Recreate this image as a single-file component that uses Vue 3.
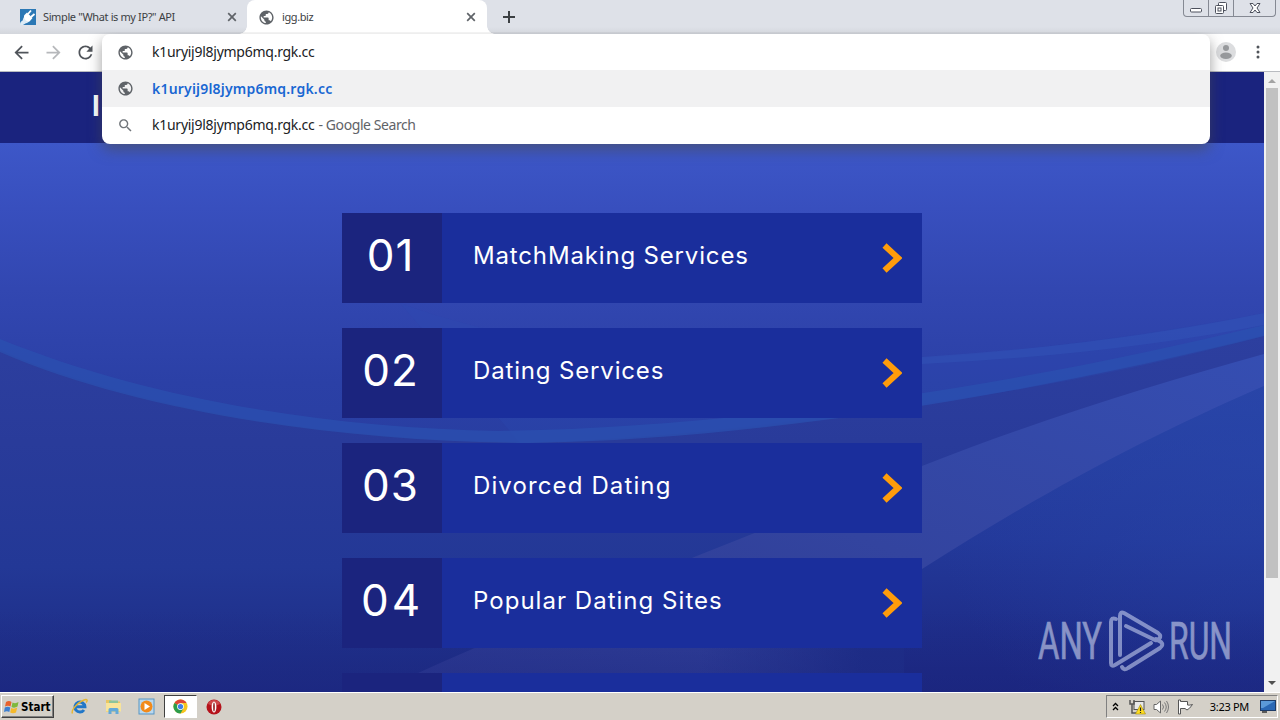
<template>
  <div class="screen">
    <div class="tab-strip">
      <div class="tab">
        <svg class="favicon" viewBox="0 0 16 16">
          <rect width="16" height="16" fill="#2b78b5" />
          <path d="M0 16c0-5 3-3 3-6L5 6l5 6-3 2c-2 0-2 1-4 2z" fill="#dcebf6" />
          <path d="M4.500 6L7 3.500l5.500 5.500-2.500 3c-2 1-4 0-5-1.500S3.500 7 4.500 6z" fill="#fff" />
          <path d="M8 5l3-3.500M11 8l3.500-3" stroke="#fff" stroke-width="1.800" />
        </svg>
        <span class="tab-title first">Simple "What is my IP?" API</span>
        <svg class="close" viewBox="0 0 10 10"><path d="M1.200 1.200l7.600 7.600M8.800 1.200L1.200 8.800" /></svg>
      </div>
      <div class="tab active">
        <svg class="globe" viewBox="0 0 24 24"><path :d="icons.globe" /></svg>
        <span class="tab-title second">igg.biz</span>
        <svg class="close" viewBox="0 0 10 10"><path d="M1.200 1.200l7.600 7.600M8.800 1.200L1.200 8.800" /></svg>
      </div>
      <svg class="new-tab" viewBox="0 0 12 12"><path d="M6 0v12M0 6h12" /></svg>
      <div class="window-controls">
        <span class="ctl">
          <svg width="14" height="16" viewBox="0 0 14 16"><rect x="1.500" y="8.500" width="11" height="3.500" rx="1" fill="#fff" stroke="#4c505c" /></svg>
        </span>
        <span class="ctl">
          <svg width="14" height="16" viewBox="0 0 14 16">
            <rect x="4.500" y="2.500" width="8" height="8" rx="1" fill="#fff" stroke="#4c505c" />
            <rect x="1.500" y="5.500" width="8" height="8" rx="1" fill="#fff" stroke="#4c505c" />
            <rect x="4" y="8" width="3" height="3" fill="none" stroke="#4c505c" />
          </svg>
        </span>
        <span class="ctl wide">
          <svg width="14" height="16" viewBox="0 0 14 16">
            <path d="M2 3.500h3l2 2.500 2-2.500h3L9 8l3 4.500H9L7 10l-2 2.500H2L5 8z" fill="#fff" stroke="#4c505c" />
          </svg>
        </span>
      </div>
    </div>

    <div class="toolbar">
      <svg class="nav" viewBox="0 0 24 24"><path :d="icons.back" /></svg>
      <svg class="nav disabled" viewBox="0 0 24 24"><path :d="icons.forward" /></svg>
      <svg class="nav" viewBox="0 0 24 24"><path :d="icons.reload" /></svg>
      <svg class="avatar" viewBox="0 0 20 20">
        <circle cx="10" cy="10" r="10" fill="#dcdddf" />
        <circle cx="10" cy="6" r="3" fill="#97999c" />
        <ellipse cx="10" cy="13.800" rx="5.800" ry="3.200" fill="#97999c" />
      </svg>
      <svg class="menu" viewBox="0 0 4 14">
        <circle cx="2" cy="2" r="1.500" /><circle cx="2" cy="7" r="1.500" /><circle cx="2" cy="12" r="1.500" />
      </svg>
    </div>

    <div class="omnibox">
      <div class="omni-row">
        <svg class="globe" viewBox="0 0 24 24"><path :d="icons.globe" /></svg>
        <span class="url">{{ query }}</span>
      </div>
      <div class="omni-row selected">
        <svg class="globe" viewBox="0 0 24 24"><path :d="icons.globe" /></svg>
        <span class="url match">{{ query }}</span>
      </div>
      <div class="omni-row">
        <svg class="globe search" viewBox="0 0 24 24"><path :d="icons.search" /></svg>
        <span class="url">{{ query }}</span><span class="hint">- Google Search</span>
      </div>
    </div>

    <div class="viewport">
      <div class="page">
        <svg class="backdrop" viewBox="0 72 1264 620" preserveAspectRatio="none">
          <defs>
            <linearGradient id="sky" x1="0" y1="0" x2="0" y2="1">
              <stop offset="0.115" stop-color="#3d57c8" />
              <stop offset="0.220" stop-color="#384fbe" />
              <stop offset="0.350" stop-color="#3247b1" />
              <stop offset="0.500" stop-color="#2b40a6" />
              <stop offset="0.700" stop-color="#263c9d" />
              <stop offset="0.880" stop-color="#1f3490" />
              <stop offset="1" stop-color="#1c2a85" />
            </linearGradient>
            <linearGradient id="under" x1="0" y1="0" x2="0" y2="1">
              <stop offset="0" stop-color="#2d3f9f" />
              <stop offset="0.300" stop-color="#293b9a" />
              <stop offset="0.650" stop-color="#233896" />
              <stop offset="1" stop-color="#1c2a82" />
            </linearGradient>
            <linearGradient id="beam" x1="0" y1="1" x2="1" y2="0">
              <stop offset="0" stop-color="#2b378f" />
              <stop offset="0.500" stop-color="#33449f" />
              <stop offset="1" stop-color="#354eb2" />
            </linearGradient>
            <radialGradient id="glow" gradientUnits="userSpaceOnUse" cx="1264" cy="455" r="340">
              <stop offset="0" stop-color="#2846ab" />
              <stop offset="1" stop-color="#2846ab" stop-opacity="0" />
            </radialGradient>
            <linearGradient id="floor" x1="0" y1="0" x2="0" y2="1">
              <stop offset="0" stop-color="#1c2680" stop-opacity="0" />
              <stop offset="1" stop-color="#1c2680" />
            </linearGradient>
            <linearGradient id="corner" x1="0" y1="0" x2="0" y2="1">
              <stop offset="0" stop-color="#2944a6" />
              <stop offset="0.500" stop-color="#23399a" />
              <stop offset="1" stop-color="#1b267f" />
            </linearGradient>
            <linearGradient id="fade" x1="0" y1="0" x2="1" y2="0">
              <stop offset="0" stop-color="#1e2e88" stop-opacity="0" />
              <stop offset="0.800" stop-color="#1e2e88" />
            </linearGradient>
          </defs>
          <rect y="72" width="1264" height="620" fill="url(#sky)" />
          <path d="M0 350C150 416 380 446 560 441C800 430 1000 400 1264 335V692H0z" fill="url(#under)" />
          <path d="M400 303C520 350 800 385 922 358C1040 350 1160 333 1264 313V336C1100 380 980 397 860 412C700 435 570 443 520 443z" fill="#2d4db2" opacity="0.250" />
          <path d="M0 339C150 400 330 428 500 431C760 427 1040 380 1264 325V336C1040 392 760 440 530 443C360 442 150 417 0 352z" fill="#2b51b1" opacity="0.700" />
          <path d="M922 357Q1110 345 1264 313V325Q1110 355 922 364z" fill="#3154b8" opacity="0.500" />
          <path d="M418 673C580 600 760 532 922 466C1050 416 1160 383 1264 354V692H380z" fill="url(#beam)" />
          <path d="M902 692V583L922 569C1040 494 1140 440 1264 386V692z" fill="url(#corner)" />
          <path d="M922 569C1040 494 1140 440 1264 386V692H922z" fill="url(#glow)" opacity="0.500" />
          <rect x="700" y="640" width="204" height="52" fill="url(#fade)" />
          <rect y="610" width="1264" height="82" fill="url(#floor)" opacity="0.450" />
        </svg>
        <header class="site-header"><span class="site-name">I</span></header>
        <main class="links">
          <a v-for="(item, i) in links" :key="item" class="link">
            <span class="num" :class="'num-' + (i + 1)">0{{ i + 1 }}</span>
            <span class="label" :class="'label-' + (i + 1)">{{ item }}</span>
            <svg class="chevron" viewBox="0 0 20 30"><path d="M2.500 2.500L16 15 2.500 27.500" /></svg>
          </a>
          <a class="link"><span class="num"></span></a>
        </main>
        <svg class="watermark" viewBox="0 0 210 70">
          <text x="0" y="50" textLength="64" lengthAdjust="spacingAndGlyphs">ANY</text>
          <text x="131" y="50" textLength="63" lengthAdjust="spacingAndGlyphs">RUN</text>
          <path d="M78 10q-5-2-5 3v41q0 4 4 2l36-22" />
          <path d="M82 46V7q0-5 4-3l34 20q4 3 1 6-2 2-4 1L88 17" />
          <path d="M84 58q2 4 6 1l32-20q4-3 1-6l-5-3" />
        </svg>
      </div>
      <div class="scrollbar">
        <i class="arrow up"></i>
        <div class="thumb"></div>
        <i class="arrow down"></i>
      </div>
    </div>

    <div class="taskbar">
      <div class="start">
        <svg width="16" height="16" viewBox="0 0 16 16">
          <path d="M2 3q3-2 5.500 0L6.500 7.500Q4 6 1 7.500z" fill="#e8622c" />
          <path d="M8.500 3.500q3 1.500 6-.5L13.500 7.500q-3 2-6 .5z" fill="#7fb83c" />
          <path d="M.8 8.500q3-1.500 5.500 0L5.300 13Q3 11.500 0 13z" fill="#3d7fd0" />
          <path d="M7.200 9q3 1.500 6-.5L12 13.500q-3 1.500-5.800 0z" fill="#f5b92b" />
        </svg>
        <span>Start</span>
      </div>
      <div class="quick">
        <div class="app">
          <svg width="17" height="17" viewBox="0 0 17 17">
            <path d="M13 12a5 5 0 1 1 .9-3.300H5" fill="none" stroke="#2277c8" stroke-width="3" />
            <path d="M1.500 15.500C-.5 12 8 3 15 1.500c2 0 1 2 0 3" fill="none" stroke="#e8b630" stroke-width="1.400" />
          </svg>
        </div>
        <div class="app">
          <svg width="17" height="17" viewBox="0 0 17 17">
            <path d="M1 2h5l1 1.500h8V14H1z" fill="#e9c662" />
            <rect x="4" y="2.500" width="9" height="3" fill="#8cc49a" />
            <path d="M1 5h15v8.500H1z" fill="#f8e49a" />
            <path d="M3.500 16v-4.500q0-1.500 1.500-1.500h7q1.500 0 1.500 1.500V16h-3v-2.500h-4V16z" fill="#63a9d8" />
          </svg>
        </div>
        <div class="app">
          <svg width="17" height="17" viewBox="0 0 17 17">
            <rect x="1" y="1" width="15" height="15" fill="#b9d8ee" stroke="#5795c4" />
            <circle cx="8.500" cy="8.500" r="6" fill="#f28a1a" />
            <path d="M6.500 5v7l5.500-3.500z" fill="#fff" />
          </svg>
        </div>
        <div class="app running">
          <svg width="15" height="15" viewBox="0 0 16 16">
            <circle cx="8" cy="8" r="7.500" fill="#f7c51e" />
            <path d="M8 8L1.500 4.250A7.500 7.500 0 0 1 14.500 4.250H8z" fill="#de4536" />
            <path d="M8 8L1.500 4.250A7.500 7.500 0 0 0 8 15.500L11 10z" fill="#2c9c4c" />
            <circle cx="8" cy="8" r="3.600" fill="#fff" />
            <circle cx="8" cy="8" r="2.800" fill="#3f7fe8" />
          </svg>
        </div>
        <div class="app">
          <svg width="16" height="16" viewBox="0 0 16 16">
            <circle cx="8" cy="8" r="7.500" fill="#b5121b" />
            <path d="M2 5a6.500 6.500 0 0 1 12 0q-6 3-12 0z" fill="#e06a6a" opacity="0.600" />
            <ellipse cx="8" cy="8" rx="2.400" ry="5.500" fill="#fff" />
            <ellipse cx="8" cy="8" rx="0.800" ry="4.500" fill="#8c1015" />
          </svg>
        </div>
      </div>
      <div class="tray">
        <svg class="expand" width="7" height="9" viewBox="0 0 7 9"><path d="M1 4l2.500-2.500L6 4M1 8l2.500-2.500L6 8" fill="none" stroke="#000" stroke-width="1.300" /></svg>
        <svg class="network" width="17" height="16" viewBox="0 0 17 16">
          <rect x="5" y="2.500" width="10" height="8" fill="#e8e8e8" stroke="#555" />
          <path d="M1 1v4h4V1M3 5v9h4" fill="none" stroke="#555" stroke-width="1.500" />
          <path d="M11.500 5.500L16.500 15h-10z" fill="#ffdc1e" stroke="#a08a10" stroke-width="0.600" />
          <path d="M11.500 8.500v3.500M11.500 13v1" stroke="#222" stroke-width="1.200" />
        </svg>
        <svg class="volume" width="17" height="16" viewBox="0 0 17 16">
          <path d="M1 5.500h2.500L7.500 2v12L3.500 10.500H1z" fill="#fff" stroke="#666" />
          <path d="M9.500 5.500q2 2.500 0 5M11.500 3.500q3.500 4.500 0 9M13.500 2q4 6 0 12" fill="none" stroke="#777" />
        </svg>
        <svg class="flag" width="17" height="16" viewBox="0 0 17 16">
          <path d="M1.500 1v14h2V9.500h4.500l2 1.500q2.500-1 5.500-5.500-3 1-5 .5V2.500h-7V1z" fill="#fff" stroke="#555" />
        </svg>
        <span class="clock">3:23 PM</span>
        <svg class="desktop" width="16" height="13" viewBox="0 0 16 13">
          <rect x="0.500" y="0.500" width="15" height="10" fill="#2a68b4" stroke="#1d3b66" />
          <path d="M1 1h14L3 8H1z" fill="#5b9ad8" />
          <path d="M2 12h5" stroke="#333" stroke-width="1.500" />
        </svg>
      </div>
    </div>
  </div>
</template>

<script setup>
const query = 'k1uryij9l8jymp6mq.rgk.cc'

const links = [
  'MatchMaking Services',
  'Dating Services',
  'Divorced Dating',
  'Popular Dating Sites'
]

const icons = {
  globe: 'M12 2C6.480 2 2 6.480 2 12s4.480 10 10 10 10-4.480 10-10S17.520 2 12 2zm-1 17.930c-3.950-.49-7-3.850-7-7.930 0-.62.08-1.210.21-1.790L9 15v1c0 1.100.9 2 2 2v1.930zm6.900-2.540c-.26-.81-1-1.390-1.900-1.390h-1v-3c0-.55-.45-1-1-1H8v-2h2c.55 0 1-.45 1-1V7h2c1.100 0 2-.9 2-2v-.41c2.930 1.190 5 4.060 5 7.410 0 2.080-.8 3.970-2.100 5.390z',
  back: 'M20 11H7.830l5.590-5.590L12 4l-8 8 8 8 1.410-1.410L7.830 13H20v-2z',
  forward: 'M12 4l-1.410 1.410L16.170 11H4v2h12.170l-5.580 5.590L12 20l8-8z',
  reload: 'M17.650 6.350C16.200 4.900 14.210 4 12 4c-4.420 0-7.990 3.580-7.990 8s3.570 8 7.990 8c3.730 0 6.840-2.550 7.730-6h-2.080c-.82 2.330-3.040 4-5.650 4-3.310 0-6-2.690-6-6s2.690-6 6-6c1.660 0 3.140.69 4.220 1.780L13 11h7V4l-2.350 2.350z',
  search: 'M15.500 14h-.79l-.28-.27C15.410 12.590 16 11.110 16 9.500 16 5.910 13.090 3 9.500 3S3 5.910 3 9.500 5.910 16 9.500 16c1.610 0 3.090-.59 4.230-1.570l.27.28v.79l5 4.990L20.490 19l-4.990-5zm-6 0C7.010 14 5 11.990 5 9.500S7.010 5 9.500 5 14 7.010 14 9.500 11.990 14 9.500 14z'
}
</script>

<style>
body {
  margin: 0;
  overflow: hidden;
}
</style>

<style scoped>
.screen {
  position: relative;
  display: flex;
  flex-direction: column;
  width: 1280px;
  height: 720px;
  overflow: hidden;
  font-family: "Noto Sans", "Open Sans", sans-serif;
}

svg {
  display: block;
  flex: none;
}

/* tabs */
.tab-strip {
  display: flex;
  height: 34px;
  background: linear-gradient(#dee1e8 27px, #d3d6dc);
}

.tab {
  display: flex;
  align-items: center;
  box-sizing: border-box;
  width: 247px;
  padding: 0 10px 0 20px;
}

.tab.active {
  position: relative;
  width: 240px;
  padding: 0 11px 0 11px;
  background: #fff;
  border-radius: 8px 8px 0 0;
}

.tab.active::before,
.tab.active::after {
  content: "";
  position: absolute;
  bottom: 0;
  width: 8px;
  height: 8px;
}

.tab.active::before {
  left: -8px;
  background: radial-gradient(circle at 0 0, transparent 7.5px, #fff 8px);
}

.tab.active::after {
  right: -8px;
  background: radial-gradient(circle at 100% 0, transparent 7.5px, #fff 8px);
}

.favicon {
  width: 16px;
  height: 16px;
}

.globe {
  width: 17px;
  height: 17px;
  fill: #5f6368;
}

.tab-title {
  flex: 1;
  padding-bottom: 2px;
  font-size: 11px;
  color: #3c4043;
  white-space: nowrap;
}

.tab-title.first {
  margin-left: 7px;
  letter-spacing: -0.38px;
}

.tab-title.second {
  margin-left: 7px;
  letter-spacing: -0.4px;
}

.close {
  width: 10px;
  height: 10px;
  stroke: #5f6368;
  stroke-width: 1.7;
}

.new-tab {
  width: 12px;
  height: 12px;
  margin: 11px 0 0 16px;
  stroke: #3c4043;
  stroke-width: 2;
}

.window-controls {
  display: flex;
  box-sizing: border-box;
  width: 93px;
  height: 17px;
  margin-left: auto;
  margin-right: 4px;
  border: 1px solid #858993;
  border-top: none;
  border-radius: 0 0 4px 4px;
}

.ctl {
  display: flex;
  justify-content: center;
  width: 24px;
  border-right: 1px solid #858993;
}

.ctl.wide {
  flex: 1;
  border-right: none;
}

/* toolbar */
.toolbar {
  display: flex;
  align-items: center;
  box-sizing: border-box;
  height: 38px;
  padding: 0 20px 1px 11px;
  background: #fff;
  border-bottom: 1px solid #b9bbc0;
}

.nav {
  width: 21px;
  height: 21px;
  margin-right: 11px;
  fill: #50545a;
}

.nav.disabled {
  fill: #b6b8bb;
}

.avatar {
  width: 20px;
  height: 20px;
  margin-left: auto;
}

.menu {
  width: 4px;
  height: 14px;
  margin-left: 20px;
  fill: #50545a;
}

/* omnibox popup */
.omnibox {
  position: absolute;
  z-index: 5;
  left: 102px;
  top: 34px;
  width: 1108px;
  height: 110px;
  overflow: hidden;
  background: #fff;
  border-radius: 8px;
  box-shadow: 0 6px 14px rgba(75, 75, 75, 0.55);
  clip-path: inset(-2px -20px -30px -20px);
}

.omni-row {
  display: flex;
  align-items: center;
  height: 36px;
  padding-left: 15px;
}

.omni-row.selected {
  height: 37px;
  background: #f1f1f2;
}

.search {
  fill: #70757a;
}

.url {
  margin-left: 18px;
  padding-bottom: 1px;
  font-size: 14px;
  letter-spacing: -0.26px;
  color: #202124;
  white-space: pre;
}

.url.match {
  font-weight: 600;
  letter-spacing: 0.2px;
  color: #1967d2;
}

.hint {
  margin-left: 4px;
  padding-bottom: 1px;
  font-size: 14px;
  letter-spacing: -0.42px;
  color: #5f6368;
}

/* web page */
.viewport {
  display: flex;
  height: 620px;
}

.page {
  position: relative;
  width: 1264px;
  height: 620px;
  overflow: hidden;
}

.backdrop {
  position: absolute;
  inset: 0;
  width: 1264px;
  height: 620px;
}

.site-header {
  position: relative;
  height: 71px;
  padding-left: 92px;
  background: #1a237e;
}

.site-name {
  font: 700 28px/68px Inter, sans-serif;
  color: #fff;
}

.links {
  position: relative;
  display: flex;
  flex-direction: column;
  gap: 25px;
  width: 580px;
  margin: 70px auto 0;
}

.link {
  display: flex;
  align-items: center;
  height: 90px;
  background: #1a2e9c;
  color: #fff;
  font-family: Inter, sans-serif;
}

.num {
  box-sizing: border-box;
  width: 100px;
  height: 90px;
  padding-right: 3px;
  background: #1b247e;
  font-size: 44px;
  line-height: 84px;
  letter-spacing: 1px;
  text-align: center;
}

.num-4 {
  letter-spacing: 3px;
  padding-right: 0;
}

.label {
  flex: 1;
  margin-left: 31px;
  padding-bottom: 4px;
  font-size: 24px;
  line-height: 86px;
  letter-spacing: 0.84px;
  white-space: nowrap;
}

.label-3 {
  letter-spacing: 1.12px;
}

.label-4 {
  letter-spacing: 1.03px;
}

.chevron {
  width: 20px;
  height: 30px;
  margin-right: 20px;
  padding-bottom: 1px;
  fill: none;
  stroke: #ff9c0a;
  stroke-width: 6;
}

.watermark {
  position: absolute;
  left: 1038px;
  top: 537px;
  width: 210px;
  height: 70px;
  opacity: 0.55;
}

.watermark text {
  font-family: Roboto, sans-serif;
  font-size: 52px;
  fill: #dfe5f8;
  stroke: #dfe5f8;
  stroke-width: 0.6;
}

.watermark path {
  fill: none;
  stroke: #d3dcf6;
  stroke-width: 4;
  stroke-linecap: round;
}

.scrollbar {
  display: flex;
  flex-direction: column;
  align-items: center;
  width: 16px;
  height: 620px;
  background: #f1f1f1;
}

.thumb {
  width: 12px;
  height: 490px;
  background: #c1c1c1;
}

.arrow {
  width: 0;
  height: 0;
  border: 4px solid transparent;
}

.arrow.up {
  margin: 3px 0 5px;
  border-bottom-color: #a3a3a3;
}

.arrow.down {
  margin-top: 103px;
  border-top-color: #505050;
}

/* taskbar */
.taskbar {
  display: flex;
  box-sizing: border-box;
  height: 28px;
  padding: 2px 2px 0 1px;
  background: #d4d0c8;
  border-top: 1px solid #fff;
}

.start {
  display: flex;
  align-items: center;
  gap: 1px;
  box-sizing: border-box;
  width: 53px;
  height: 23px;
  padding-left: 2px;
  border: 1px solid;
  border-color: #fff #404040 #404040 #fff;
  box-shadow: inset -1px -1px #808080;
  font: bold 11.5px "DejaVu Sans Condensed", "DejaVu Sans", sans-serif;
  color: #000;
}

.quick {
  display: flex;
  margin-left: 9px;
}

.app {
  display: flex;
  align-items: center;
  justify-content: center;
  box-sizing: border-box;
  width: 33.5px;
  height: 23px;
}

.app.running {
  background: #fff;
  border: 1px solid;
  border-color: #404040 #fff #fff #404040;
}

.tray {
  display: flex;
  align-items: center;
  box-sizing: border-box;
  width: 172px;
  height: 23px;
  margin-left: auto;
  padding: 0 1px 0 5px;
  border: 1px solid;
  border-color: #808080 #fff #fff #808080;
}

.network {
  margin-left: 10px;
}

.volume {
  margin-left: 7px;
}

.flag {
  margin-left: 7px;
}

.clock {
  margin-left: auto;
  font-size: 11px;
  letter-spacing: -0.3px;
  color: #000;
  white-space: nowrap;
}

.desktop {
  margin-left: 11px;
}
</style>
